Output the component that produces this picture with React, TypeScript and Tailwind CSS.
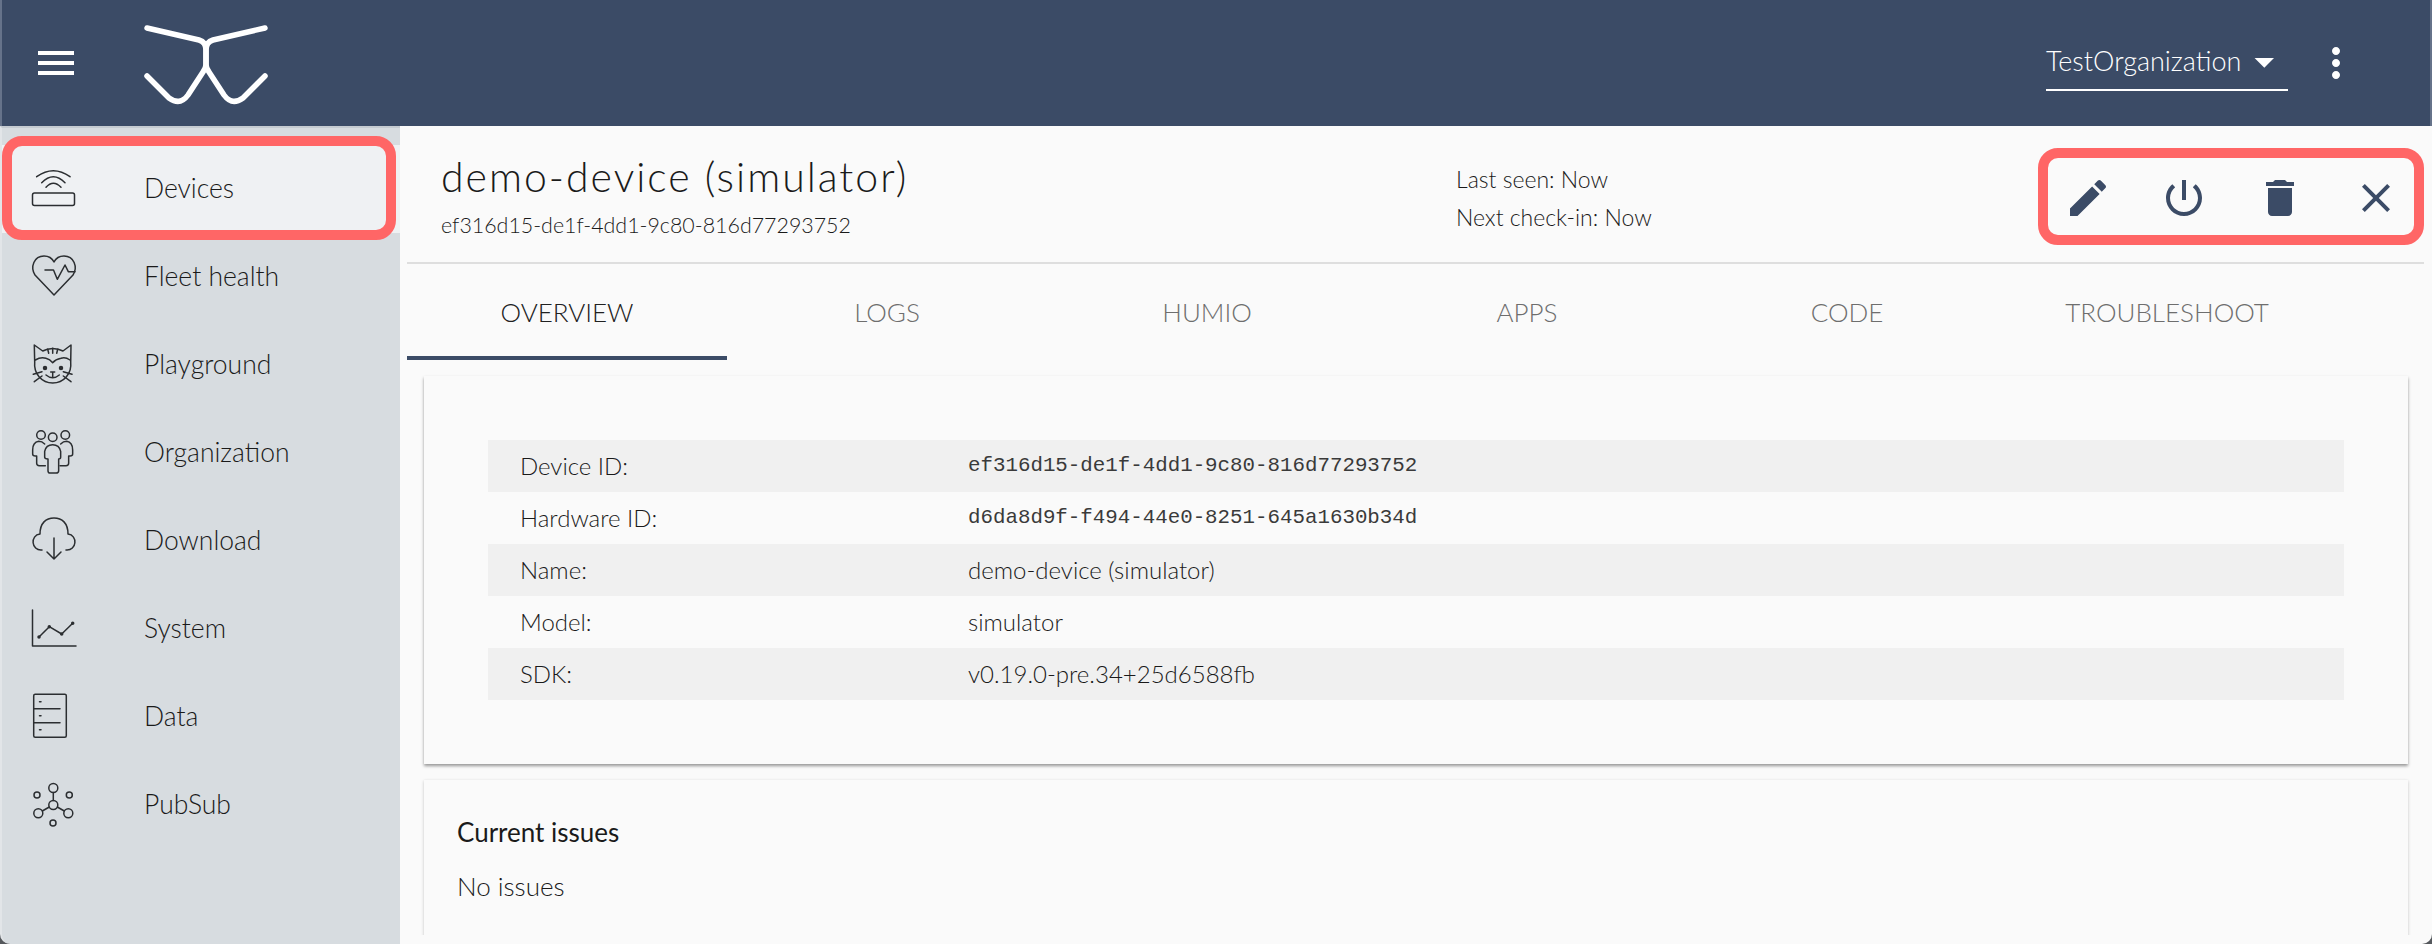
import React from 'react';

const navy = '#3b4b66';

function Menu() {
  return (
    <svg viewBox="0 0 24 24" className="w-12 h-12" fill="#fff">
      <path d="M3 18h18v-2H3v2zm0-5h18v-2H3v2zm0-7v2h18V6H3z" />
    </svg>
  );
}

function Logo() {
  return (
    <svg viewBox="0 0 128 84" className="w-[128px] h-[84px]" fill="none" stroke="#fff" strokeWidth="5.5" strokeLinecap="round" strokeLinejoin="round">
      <path d="M5 6 L57 18 Q64 20 64 28 V42 Q64 46 61 50 L46 73 Q38 84 27 76 Q26 75 5 54" />
      <path d="M123 6 L71 18 Q64 20 64 28 V42 Q64 46 67 50 L82 73 Q90 84 101 76 Q102 75 123 54" />
    </svg>
  );
}

const iconProps = {
  viewBox: '0 0 48 48',
  className: 'w-12 h-12 shrink-0',
  fill: 'none',
  stroke: '#2b2e31',
  strokeWidth: 1.5,
  strokeLinecap: 'round' as const,
  strokeLinejoin: 'round' as const,
};

const icons: Record<string, React.ReactNode> = {
  Devices: (
    <svg {...iconProps}>
      <rect x="2.5" y="28" width="42" height="12.5" rx="2" />
      <path d="M6.7 11.7 Q23.3 -0.3 40 11.7" />
      <path d="M11.7 17.7 Q23.3 5.7 35 17.7" />
      <path d="M16 22.3 Q23.3 14.3 31 22.3" />
    </svg>
  ),
  'Fleet health': (
    <svg {...iconProps}>
      <path d="M24 42 L5 22 C0 14 4 3 14 3 C18 3 22 5 24 9 C26 5 30 3 34 3 C44 3 48 14 43 22 Z" />
      <path d="M15 17 H23.5 L27.3 26.3 L35 12 L38.3 18.7 H45" />
    </svg>
  ),
  Playground: (
    <svg {...iconProps}>
      <path d="M4.3 4 L4.7 21 C3.5 33 12 42 22.7 42 C33.5 42 42 33 40.7 21 L41 4 L33 10 C27 6.5 18.5 6.5 12.7 10 Z" />
      <path d="M22.7 7.3 V12.3 M17.7 8.3 L18.7 12.3 M27.7 8.3 L26.7 12.3" />
      <path d="M5.3 19 Q11 15.5 16 17.3 Q20 18.5 22.7 21.7 Q25.5 18.5 31 17.3 Q35 15.5 40 19" />
      <circle cx="15" cy="27" r="1.5" fill="#2b2e31" />
      <circle cx="31" cy="27" r="1.5" fill="#2b2e31" />
      <path d="M20.7 31 H24.7 M22.7 31 V36" />
      <path d="M16 34 Q22.7 39.5 29.3 34" />
      <path d="M3.3 33.3 L12 30.7 M4.3 40.7 L12 35 M42 33.3 L33.3 30.7 M41 40.7 L33.3 35" />
    </svg>
  ),
  Organization: (
    <svg {...iconProps}>
      <circle cx="11" cy="6" r="4.3" />
      <circle cx="22.7" cy="8.3" r="4.3" />
      <circle cx="35.3" cy="6" r="4.3" />
      <g transform="translate(-4 -5) scale(0.3333)" strokeWidth="4.5">
        <path d="M56 60 Q48 52 38 52 Q20 55 20 78 V90 Q20 96 28 96 H32 V118 Q32 125 40 125 H58" />
        <path d="M104 60 Q112 52 122 52 Q140 55 140 78 V90 Q140 96 132 96 H128 V118 Q128 125 120 125 H102" />
        <path d="M56 100 V82 Q60 62 80 62 Q100 62 104 82 V100 Q104 105 98 105 V140 Q98 147 90 147 H72 Q66 147 66 140 V105 Q56 105 56 100 Z" />
      </g>
    </svg>
  ),
  Download: (
    <svg {...iconProps}>
      <path d="M12 33 C1 34 0 18 10 17 C10 6 16 1 24 1 C32 1 38 6 38 17 C48 18 47 34 36 33" />
      <path d="M24 21 V42 M17 35 L24 42 L31 35" />
    </svg>
  ),
  System: (
    <svg {...iconProps}>
      <path d="M2.5 5 V41 H46" />
      <path d="M9 32 L19.3 21.7 L31.7 29 L42.7 18.3" />
      <circle cx="9" cy="32" r="1" fill="#2b2e31" />
      <circle cx="19.3" cy="21.7" r="1" fill="#2b2e31" />
      <circle cx="31.7" cy="29" r="1" fill="#2b2e31" />
      <circle cx="42.7" cy="18.3" r="1" fill="#2b2e31" />
    </svg>
  ),
  Data: (
    <svg {...iconProps}>
      <rect x="3.7" y="1.3" width="32.6" height="43" rx="1.5" />
      <path d="M3.7 15.7 H30 M3.7 29.7 H30" />
      <path d="M9.5 8.7 H11 M9.5 22.7 H11 M9.5 36.7 H11" />
    </svg>
  ),
  PubSub: (
    <svg {...iconProps}>
      <circle cx="23.3" cy="7" r="4.5" />
      <circle cx="23.3" cy="24" r="4.5" />
      <circle cx="8.3" cy="32.3" r="4.5" />
      <circle cx="38.3" cy="32.3" r="4.5" />
      <circle cx="7" cy="14" r="3" />
      <circle cx="39.3" cy="14" r="3" />
      <circle cx="23" cy="42" r="3" />
      <path d="M23.3 11.5 V19.5 M19.3 26 L12.3 30 M27.3 26 L34.3 30" />
    </svg>
  ),
};

const navItems = ['Devices', 'Fleet health', 'Playground', 'Organization', 'Download', 'System', 'Data', 'PubSub'];
const tabs = ['OVERVIEW', 'LOGS', 'HUMIO', 'APPS', 'CODE', 'TROUBLESHOOT'];

const rows = [
  { label: 'Device ID:', value: 'ef316d15-de1f-4dd1-9c80-816d77293752', mono: true },
  { label: 'Hardware ID:', value: 'd6da8d9f-f494-44e0-8251-645a1630b34d', mono: true },
  { label: 'Name:', value: 'demo-device (simulator)' },
  { label: 'Model:', value: 'simulator' },
  { label: 'SDK:', value: 'v0.19.0-pre.34+25d6588fb' },
];

const actions = [
  'M3 17.25V21h3.75L17.81 9.94l-3.75-3.75L3 17.25zM20.71 7.04c.39-.39.39-1.02 0-1.41l-2.34-2.34c-.39-.39-1.02-.39-1.41 0l-1.83 1.83 3.75 3.75 1.83-1.83z',
  'M13 3h-2v10h2V3zm4.83 2.17l-1.42 1.42C17.99 7.86 19 9.81 19 12c0 3.87-3.13 7-7 7s-7-3.13-7-7c0-2.19 1.01-4.14 2.58-5.42L6.17 5.17C4.23 6.82 3 9.26 3 12c0 4.97 4.03 9 9 9s9-4.03 9-9c0-2.74-1.23-5.18-3.17-6.83z',
  'M6 19c0 1.1.9 2 2 2h8c1.1 0 2-.9 2-2V7H6v12zM19 4h-3.5l-1-1h-5l-1 1H5v2h14V4z',
  'M19 6.41L17.59 5 12 10.59 6.41 5 5 6.41 10.59 12 5 17.59 6.41 19 12 13.41 17.59 19 19 17.59 13.41 12z',
];

export default function App() {
  return (
    <div className="relative h-[944px] w-[2432px] overflow-hidden bg-[#55585c] font-['Lato',sans-serif] font-light text-[#1a1a1a]">
      <header className="flex h-[126px] items-center border-x-2 border-[#66738a] bg-[#3b4b66] pl-[30px] pr-[70px]">
        <Menu />
        <div className="ml-[62px] mt-[1px]">
          <Logo />
        </div>
        <div className="ml-auto mt-[-1px] flex h-[56px] w-[242px] items-center justify-between border-b-2 border-white text-[27px] text-white">
          <span>TestOrganization</span>
          <svg viewBox="0 0 24 24" className="h-12 w-12" fill="#fff">
            <path d="M7 10l5 5 5-5z" />
          </svg>
        </div>
        <svg viewBox="0 0 24 24" className="ml-6 h-12 w-12" fill="#fff">
          <path d="M12 8c1.1 0 2-.9 2-2s-.9-2-2-2-2 .9-2 2 .9 2 2 2zm0 2c-1.1 0-2 .9-2 2s.9 2 2 2 2-.9 2-2-.9-2-2-2zm0 6c-1.1 0-2 .9-2 2s.9 2 2 2 2-.9 2-2-.9-2-2-2z" />
        </svg>
      </header>

      <div className="flex h-[818px]">
        <nav className="w-[400px] shrink-0 rounded-bl-[10px] border-l-2 border-t-2 border-l-[#e2e5e8] border-t-[#c5cbd1] bg-[#d7dce0] pt-[17px]">
          {navItems.map((item) => (
            <div
              key={item}
              className={`flex h-[88px] items-center pl-[28px] text-[26.5px] ${item === 'Devices' ? 'bg-[#eff1f3]' : ''}`}
            >
              {icons[item]}
              <span className="ml-[66px]">{item}</span>
            </div>
          ))}
        </nav>

        <main className="flex-1 rounded-br-[10px] bg-[#fafafa]">
          <div className="h-[809px] overflow-hidden pl-[7px] pr-2">
            <div className="flex h-[138px] items-center border-b-2 border-[#dedede] pl-[34px]">
              <div className="mt-[6px] w-[1015px]">
                <h1 className="text-[41px] leading-[46px] font-light tracking-[2px]">demo-device (simulator)</h1>
                <p className="mt-[10px] text-[21.4px] leading-[30px]">ef316d15-de1f-4dd1-9c80-816d77293752</p>
              </div>
              <div className="mt-2 text-[23px] leading-[38px]">
                <p>Last seen: Now</p>
                <p>Next check-in: Now</p>
              </div>
              <div className="ml-auto mt-2 flex">
                {actions.map((d) => (
                  <svg key={d} viewBox="0 0 24 24" className="mx-6 h-12 w-12" fill={navy}>
                    <path d={d} />
                  </svg>
                ))}
              </div>
            </div>

            <div className="flex h-[96px] items-start">
              {tabs.map((tab) => (
                <div
                  key={tab}
                  className={`flex h-[96px] w-[320px] items-center justify-center border-b-4 pt-1 text-[26px] ${
                    tab === 'OVERVIEW' ? 'border-[#3b4b66] text-[#212121]' : 'border-transparent text-[#6e6e6e]'
                  }`}
                >
                  {tab}
                </div>
              ))}
            </div>

            <section className="ml-[17px] mt-4 h-[388px] w-[1984px] bg-[#fafafa] px-16 pt-16 shadow-[0_2px_3px_rgba(0,0,0,0.4)]">
              {rows.map((row, i) => (
                <div key={row.label} className={`flex h-[52px] items-center text-[24px] ${i % 2 === 0 ? 'bg-[#f0f0f0]' : ''}`}>
                  <span className="w-[480px] pl-8">{row.label}</span>
                  <span className={row.mono ? "font-['Liberation_Mono',monospace] text-[20.8px] font-normal text-[#3a3a3a]" : ''}>{row.value}</span>
                </div>
              ))}
            </section>

            <section className="ml-[17px] mt-4 h-[300px] w-[1984px] bg-[#fafafa] px-[33px] pt-[35px] shadow-[0_1px_3px_rgba(0,0,0,0.22)]">
              <h2 className="text-[26px] leading-[34px] font-normal">Current issues</h2>
              <p className="mt-[20px] text-[26px] leading-[34px]">No issues</p>
            </section>
          </div>
        </main>
      </div>

      {/* annotation outlines drawn on top of the screenshot */}
      <div className="absolute left-[2px] top-[136px] h-[104px] w-[394px] rounded-[20px] border-[10px] border-[#ff6666]" />
      <div className="absolute left-[2038px] top-[148px] h-[97px] w-[386px] rounded-[20px] border-[10px] border-[#ff6666]" />
    </div>
  );
}
